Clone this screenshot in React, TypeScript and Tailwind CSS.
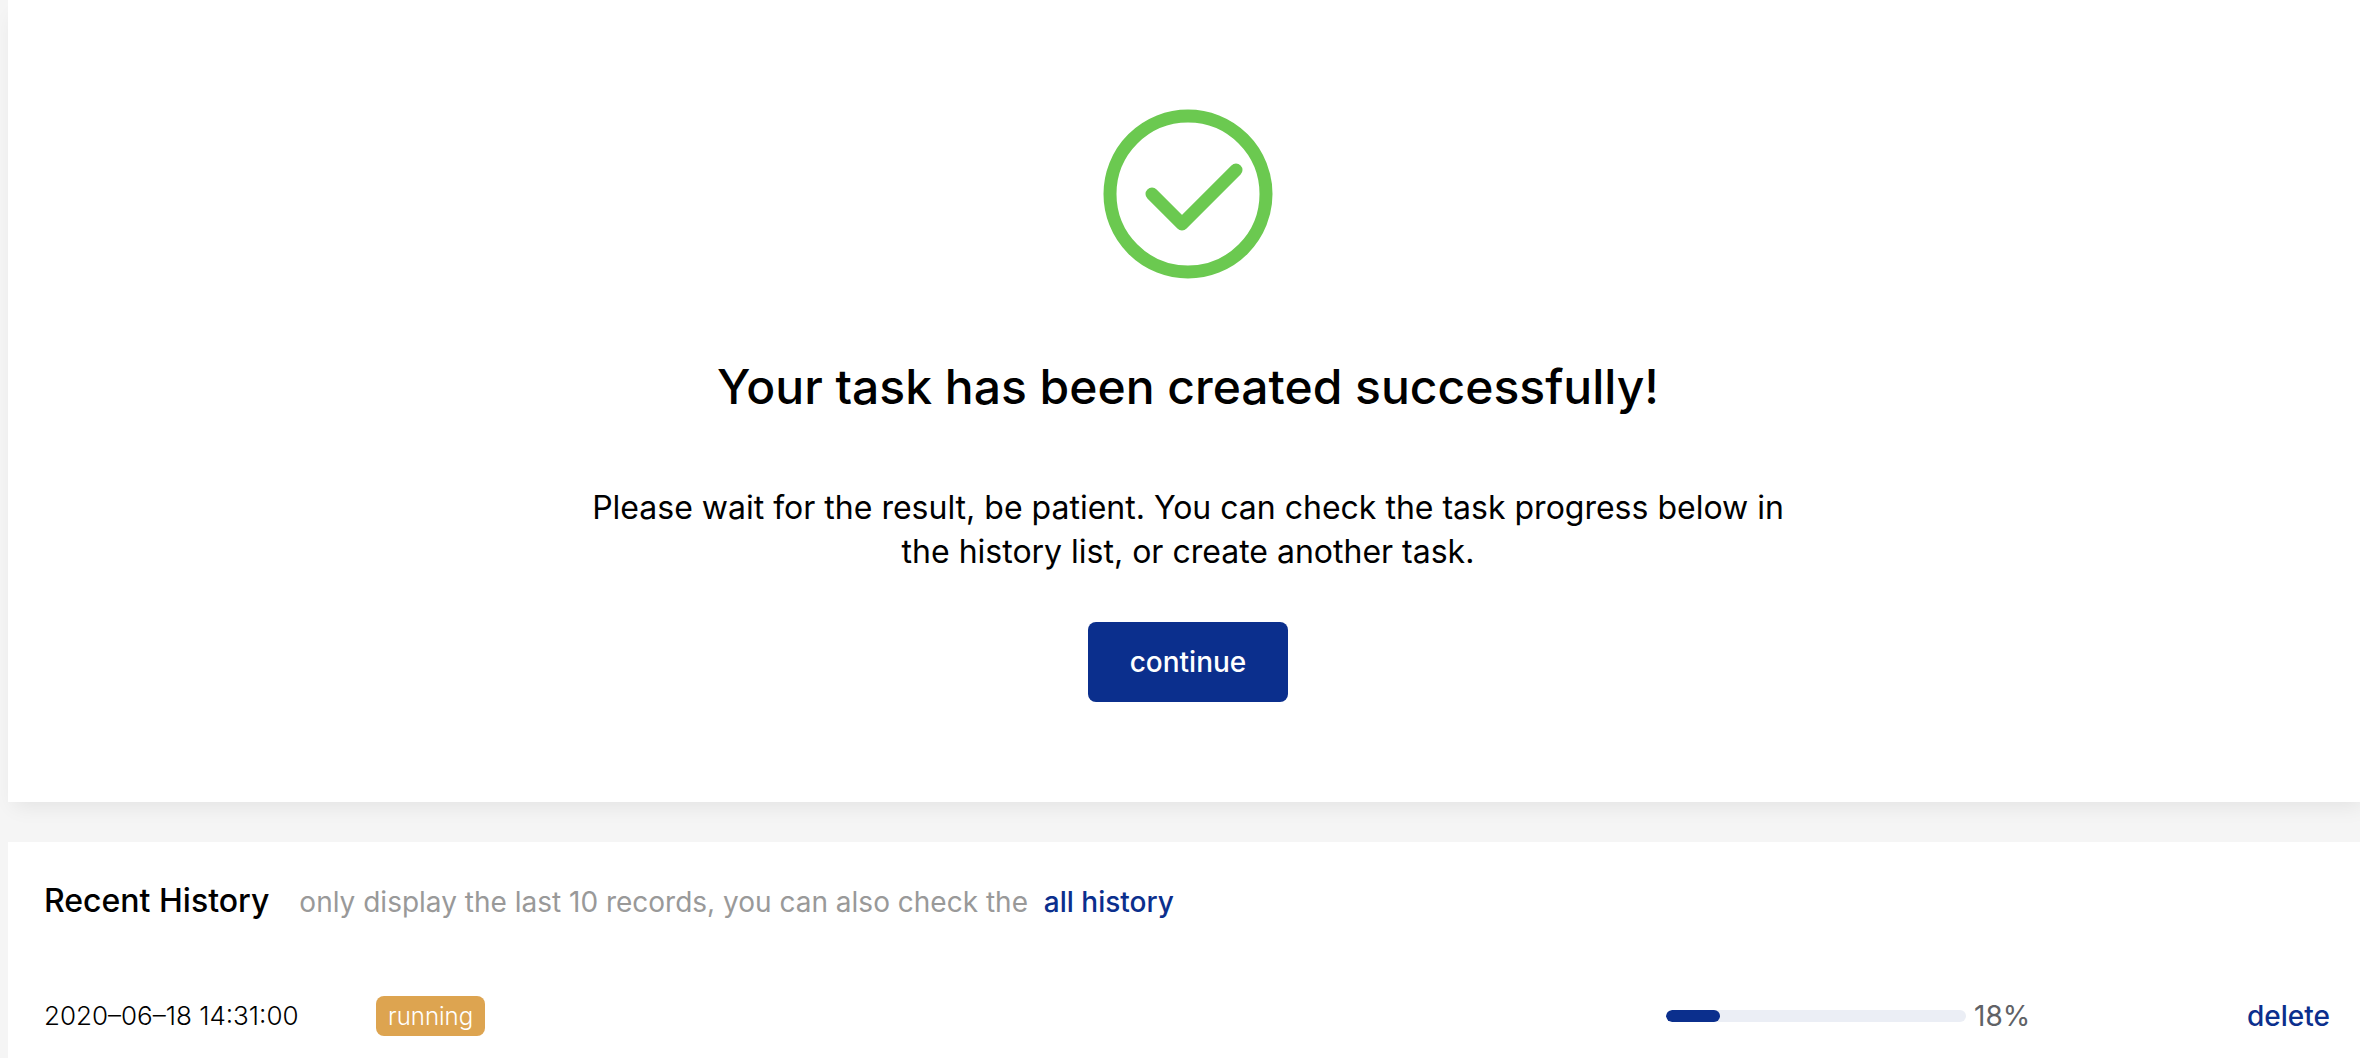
import { useState } from 'react';

const initialTasks = [{ id: 1, createdAt: '2020–06–18 14:31:00', status: 'running', progress: 18 }];

function SuccessIcon() {
  return (
    <svg className="h-[170px] w-[170px]" viewBox="0 0 170 170" fill="none" stroke="#6bc950" aria-hidden="true">
      <circle cx="85" cy="85" r="78" strokeWidth="13" />
      <path d="M49 85 L79 115 L133 61" strokeWidth="13" strokeLinecap="round" strokeLinejoin="round" />
    </svg>
  );
}

function ProgressBar({ value }: { value: number }) {
  return (
    <div className="flex items-center gap-2">
      <div className="h-3 w-[300px] overflow-hidden rounded-full bg-[#ebeef5]" role="progressbar" aria-label="Task progress" aria-valuenow={value} aria-valuemin={0} aria-valuemax={100}>
        <div className="h-full rounded-full bg-[#0b2f8d]" style={{ width: `${value}%` }} />
      </div>
      <span className="text-[28px] leading-10 text-[#606266]">{value}%</span>
    </div>
  );
}

export default function App() {
  const [tasks, setTasks] = useState(initialTasks);

  const handleDelete = (id: number) => {
    setTasks(tasks.filter((task) => task.id !== id));
  };

  return (
    <main className="flex min-h-screen flex-col gap-10 overflow-x-hidden bg-[#f5f5f5] pl-2 font-['Inter','Liberation_Sans',sans-serif] text-black">
      <section className="-mr-2 flex flex-col items-center bg-white px-9 pt-[109px] pb-[100px] text-center shadow-[0_10px_20px_-6px_rgba(0,0,0,0.08)]">
        <SuccessIcon />
        <h1 className="mt-[78px] text-[48px] leading-[60px] font-medium">Your task has been created successfully!</h1>
        <p className="mt-[69px] max-w-[1200px] text-[32px] leading-11">
          Please wait for the result, be patient. You can check the task progress below in the history list, or create another task.
        </p>
        <button type="button" className="mt-12 h-20 w-[200px] rounded-lg bg-[#0b2f8d] text-[28px] font-medium text-white hover:bg-[#1e419b]">
          continue
        </button>
      </section>

      <section className="-mr-2 grow bg-white px-9 pt-[37px]">
        <div className="flex items-baseline">
          <h2 className="text-[32px] leading-11 font-medium">Recent History</h2>
          <p className="ml-[30px] text-[28px] leading-11 text-[#999999]">
            only display the last 10 records, you can also check the{' '}
            <a href="#history" className="ml-2 font-medium text-[#0b2f8d]">
              all history
            </a>
          </p>
        </div>
        <ul className="mt-[72px]">
          {tasks.map((task) => (
            <li key={task.id} className="flex h-10 items-center">
              <time className="w-[332px] text-[26px] leading-10 font-light">{task.createdAt}</time>
              <span className="rounded-lg bg-[#dda450] px-3 pt-0.5 text-[24px] leading-[38px] font-light text-white">{task.status}</span>
              <div className="ml-auto w-[530px]">
                <ProgressBar value={task.progress} />
              </div>
              <button type="button" className="w-[136px] pr-0.5 text-right text-[28px] leading-10 font-medium text-[#0b2f8d]" onClick={() => handleDelete(task.id)}>
                delete
              </button>
            </li>
          ))}
        </ul>
      </section>
    </main>
  );
}
